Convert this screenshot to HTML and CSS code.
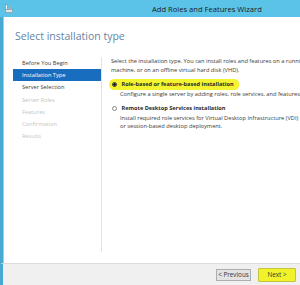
FILE: index.html
```
<!DOCTYPE html>
<html lang="en">
<head>
  <meta charset="UTF-8">
  <title>Add Roles and Features Wizard</title>
  <link rel="stylesheet" href="styles.css">
</head>
<body>

<div class="window">
  <div class="titlebar">
    <svg class="app-icon" width="8" height="9" viewBox="0 0 8 9">
      <rect x="0.5" y="0.5" width="2" height="6" fill="#f4f4f4" stroke="#7a8a96" stroke-width="0.6"/>
      <rect x="0.5" y="5.5" width="7" height="3" fill="#dfe6ea" stroke="#7a8a96" stroke-width="0.6"/>
      <rect x="3.5" y="3" width="3" height="2.5" fill="#9fb2bf"/>
    </svg>
    <span class="caption">Add Roles and Features Wizard</span>
  </div>

  <div class="client">
    <h1 class="page-title">Select installation type</h1>
    <div class="wizard">
      <ul class="steps">
        <li>Before You Begin</li>
        <li class="active">Installation Type</li>
        <li>Server Selection</li>
        <li class="disabled">Server Roles</li>
        <li class="disabled">Features</li>
        <li class="disabled">Confirmation</li>
        <li class="disabled">Results</li>
      </ul>
      <div class="pane">
        <p class="intro">Select the installation type. You can install roles and features on a running physical computer or virtual<br>machine, or on an offline virtual hard disk (VHD).</p>

        <div class="option">
          <div class="option-head marker">
            <span class="radio checked"></span>
            <span class="label">Role-based or feature-based installation</span>
          </div>
          <p class="desc">Configure a single server by adding roles, role services, and features.</p>
        </div>

        <div class="option">
          <div class="option-head">
            <span class="radio"></span>
            <span class="label">Remote Desktop Services installation</span>
          </div>
          <p class="desc">Install required role services for Virtual Desktop Infrastructure (VDI) to deploy a virtual machine-based<br>or session-based desktop deployment.</p>
        </div>
      </div>
    </div>
  </div>

  <div class="footer">
    <button class="btn">&lt; Previous</button>
    <button class="btn next">Next &gt;</button>
  </div>
</div>

</body>
</html>
```

FILE: styles.css
```
html, body {
  margin: 0;
  padding: 0;
}
body {
  width: 300px;
  height: 285px;
  overflow: hidden;
  font-family: 'Open Sans', 'Noto Sans', sans-serif;
  color: #333;
  background: #fff;
}
.window {
  display: flex;
  flex-direction: column;
  height: 285px;
  width: 300px;
}
.titlebar {
  height: 17px;
  flex: none;
  display: flex;
  align-items: center;
  background: #5cc3e8;
  padding-left: 5px;
}
.app-icon {
  display: block;
  margin-top: -1px;
}
.caption {
  margin-left: 139px;
  font-size: 7.6px;
  color: #1b1b1b;
  white-space: nowrap;
}
.client {
  flex: 1;
  display: flex;
  flex-direction: column;
  border-left: 3px solid #4aa9d2;
  box-shadow: inset 1px 0 0 #8fd4ee;
  padding-bottom: 11px;
  min-height: 0;
}
.page-title {
  margin: 0;
  padding: 12px 0 0 12px;
  height: 28px;
  box-sizing: border-box;
  font-size: 10.5px;
  line-height: 15px;
  font-weight: 400;
  color: #6584a3;
  white-space: nowrap;
}
.wizard {
  flex: 1;
  display: flex;
  margin-top: 12px;
}
.steps {
  list-style: none;
  margin: 0 0 0 10px;
  padding: 0;
  width: 88px;
  border-right: 1px solid #e3e3e3;
}
.steps li {
  height: 12.2px;
  line-height: 12px;
  padding-left: 9px;
  font-size: 5.7px;
  color: #3c3c3c;
  white-space: nowrap;
}
.steps li.active {
  background: #196dbe;
  color: #fff;
}
.steps li.disabled {
  color: #c4c4c4;
}
.pane {
  flex: 1;
  padding-left: 9px;
  white-space: nowrap;
  font-size: 5.7px;
  overflow: hidden;
}
.intro {
  margin: 0 0 4.5px;
  line-height: 8.5px;
  color: #3a3a3a;
}
.option {
  margin-bottom: 4.5px;
}
.option-head {
  display: flex;
  align-items: center;
  height: 11px;
  gap: 5px;
  font-size: 5.6px;
  font-weight: 700;
  color: #2a2a2a;
}
.option-head.marker {
  width: 128px;
  margin-left: -2px;
  padding-left: 2px;
  background: #f4f431;
  border-radius: 6px 5px 5px 6px;
}
.radio {
  width: 5px;
  height: 5px;
  flex: none;
  box-sizing: border-box;
  border: 0.8px solid #8a8a8a;
  border-radius: 50%;
  background: #fff;
  margin-left: 0.5px;
}
.radio.checked {
  border-color: #333;
  background: radial-gradient(circle, #222 0 1.3px, #fff 1.5px);
}
.desc {
  margin: 0;
  padding-left: 9px;
  line-height: 8.5px;
  color: #3a3a3a;
}
.footer {
  height: 22px;
  flex: none;
  box-sizing: border-box;
  display: flex;
  align-items: center;
  justify-content: flex-end;
  gap: 7px;
  padding-right: 4px;
  background: #f0f0f0;
  border-top: 1px solid #dcdcdc;
  border-left: 3px solid #4aa9d2;
}
.btn {
  height: 12px;
  padding: 0;
  font-family: 'Open Sans', sans-serif;
  font-size: 6.3px;
  color: #333;
  background: #e3e3e3;
  border: 1px solid #adadad;
  width: 35px;
}
.btn.next {
  width: 38px;
  height: 14px;
  background: #f2f22c;
  border-color: #c4c43c;
  border-radius: 1px;
}
```
